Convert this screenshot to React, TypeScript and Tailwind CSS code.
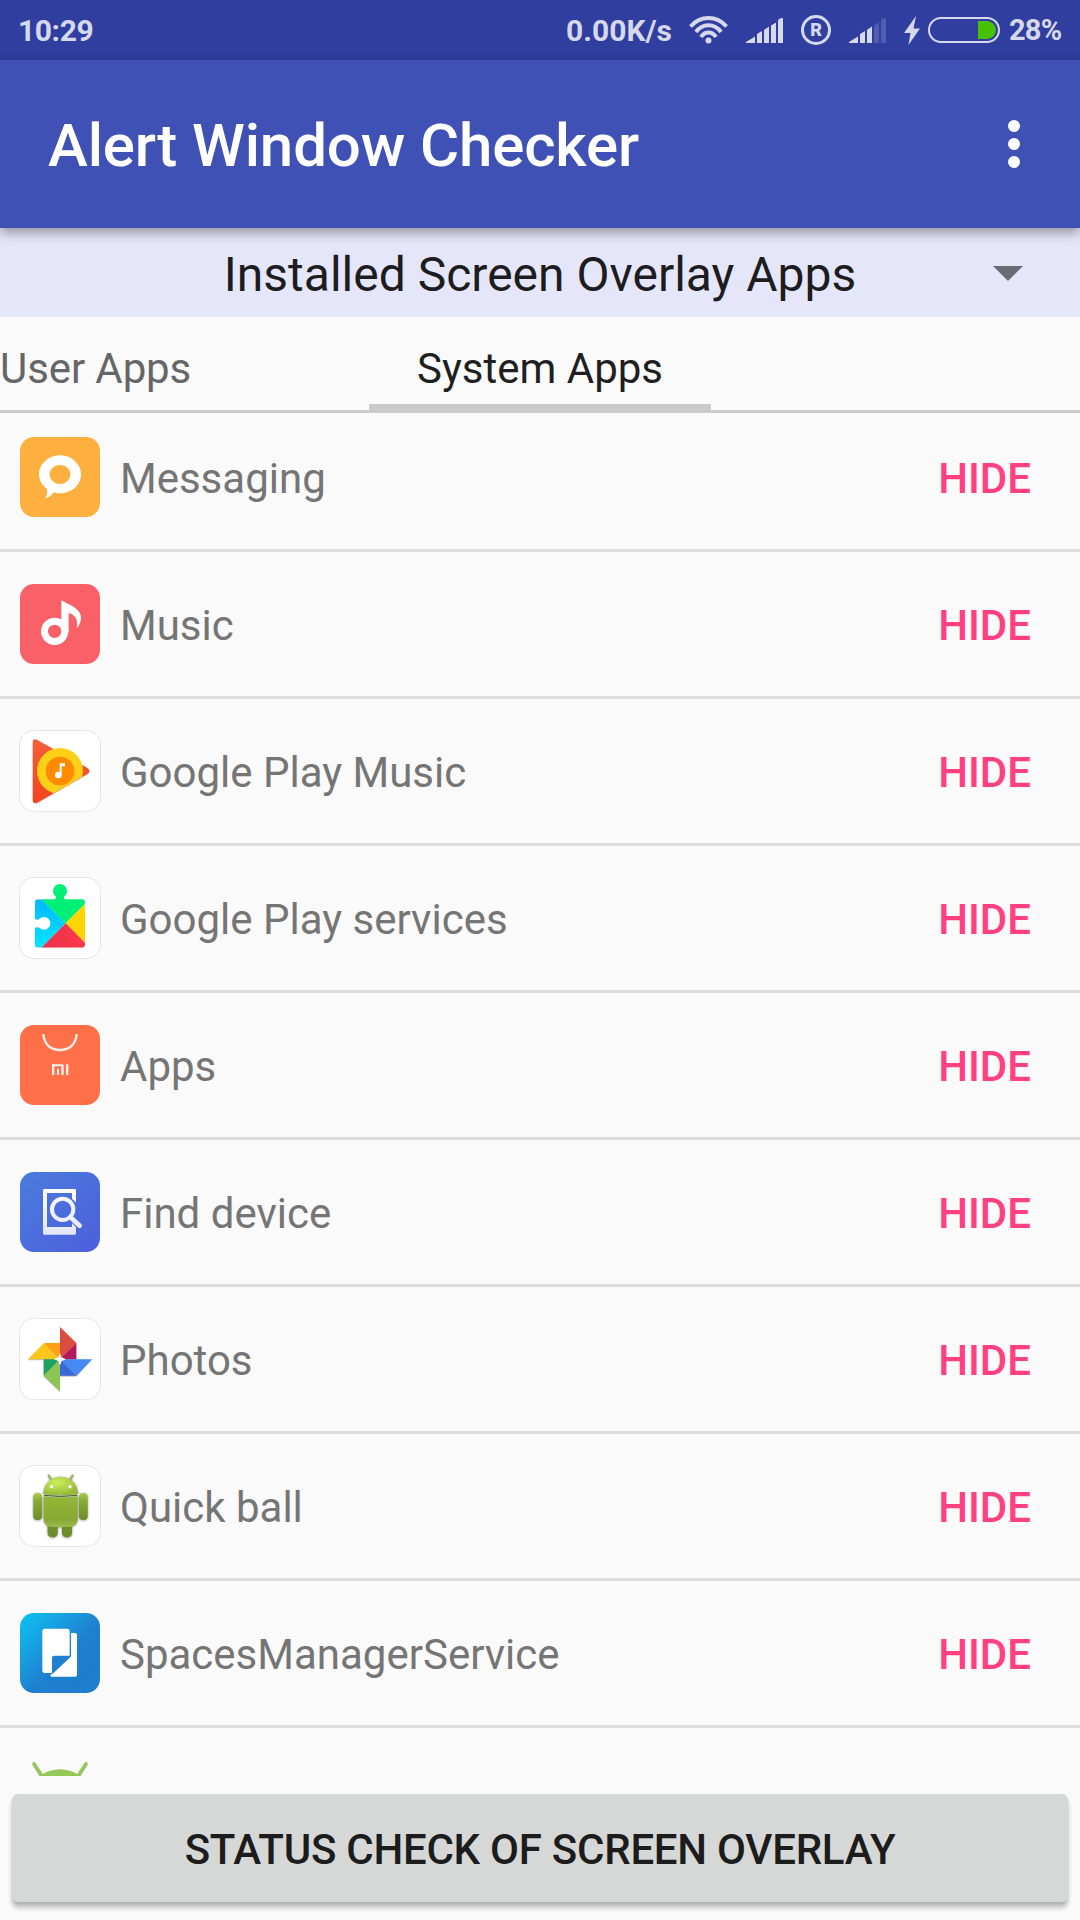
import React from 'react';

type AppItem = {
  name: string;
  icon: React.ReactNode;
  tile: string;
};

const WHITE_TILE = 'bg-white shadow-[0_0_0_1px_#e6e6e6]';

const Glyph: React.FC<{ children: React.ReactNode }> = ({ children }) => (
  <svg className="block h-20 w-20" viewBox="0 0 240 240" fill="none">
    {children}
  </svg>
);

const MessagingIcon = () => (
  <Glyph>
    <path
      fill="#fff"
      fillRule="evenodd"
      d="M120 55C155 55 183 81 183 112C183 144 155 169 120 169C113 169 107 168 101 166C95 174 87 182 78 183C76 183 77 180 79 178C82 172 82 164 81 156C67 146 57 130 57 112C57 81 86 55 120 55ZM120 84C103 84 89 96 89 112C89 128 103 141 120 141C137 141 151 128 151 112C151 96 137 84 120 84Z"
    />
  </Glyph>
);

const MusicIcon = () => (
  <Glyph>
    <circle cx="104" cy="142" r="30.500" stroke="#fff" strokeWidth="21" />
    <path fill="#fff" d="M124 49C146 62 183 73 183 101C183 114 176 126 170 133C174 112 171 94 146 87V142H124Z" />
  </Glyph>
);

const PlayMusicIcon = () => (
  <Glyph>
    <defs>
      <linearGradient id="pm-red" x1="0" y1="0" x2="0" y2="1">
        <stop offset="0" stopColor="#f4603a" />
        <stop offset="1" stopColor="#f5421f" />
      </linearGradient>
      <clipPath id="pm-clip">
        <path d="M0 0H240V107L205 127L46 219L0 245Z" />
      </clipPath>
    </defs>
    <path d="M46 218L205 127" stroke="#000" strokeOpacity=".2" strokeWidth="5" />
    <path
      d="M38 35Q38 21 51 26L203 111Q214 120 203 128L54 214Q38 221 38 206Z"
      fill="url(#pm-red)"
    />
    <circle cx="120" cy="120" r="69" fill="#fdd017" clipPath="url(#pm-clip)" />
    <circle cx="120" cy="120" r="43" fill="#ff8c00" />
    <path d="M119 97H135V106H125V132H119Z" fill="#fff" />
    <circle cx="115" cy="132" r="10" fill="#fff" />
  </Glyph>
);

const PlayServicesIcon = () => (
  <Glyph>
    <defs>
      <clipPath id="ps-clip">
        <rect x="45" y="64" width="150" height="145" rx="9" />
      </clipPath>
      <linearGradient id="ps-blue" x1="0" y1="0" x2="0" y2="1">
        <stop offset="0" stopColor="#00b8ff" />
        <stop offset="1" stopColor="#00e5ff" />
      </linearGradient>
      <linearGradient id="ps-red" x1="0" y1="0" x2="1" y2="0">
        <stop offset="0" stopColor="#e9304f" />
        <stop offset="1" stopColor="#ff3a44" />
      </linearGradient>
    </defs>
    <path d="M108 52Q110 60 103 66H137Q130 60 132 52Z" fill="#00f076" />
    <circle cx="120" cy="39" r="21" fill="#00f076" />
    <g clipPath="url(#ps-clip)">
      <path d="M45 64H65L137 136L64 209H45Z" fill="url(#ps-blue)" />
      <path d="M62 61H212L137 136Z" fill="#00f076" />
      <path d="M195 78L137 136L195 194Z" fill="#ffd500" />
      <path d="M64 209L137 136L210 209Z" fill="url(#ps-red)" />
      <path d="M43 122Q50 127 58 124V149Q50 145 43 151Z" fill="#fff" />
      <circle cx="72" cy="136" r="19" fill="#fff" />
    </g>
  </Glyph>
);

const MiAppsIcon = () => (
  <Glyph>
    <path d="M70 27C72 58 92 75 120 75C148 75 168 58 170 27" stroke="#fff1ec" strokeWidth="7" />
    <g fill="#fff1ec">
      <rect x="96" y="118" width="7" height="32" />
      <rect x="96" y="118" width="34" height="6" rx="2" />
      <rect x="124" y="120" width="7" height="30" />
      <rect x="111" y="131" width="6" height="19" />
      <rect x="138" y="118" width="7" height="32" />
    </g>
  </Glyph>
);

const FindDeviceIcon = () => (
  <Glyph>
    <defs>
      <linearGradient id="fd-fill" gradientUnits="userSpaceOnUse" x1="0" y1="50" x2="0" y2="190">
        <stop offset="0" stopColor="#fff" />
        <stop offset="1" stopColor="#e3e5f7" />
      </linearGradient>
    </defs>
    <path
      fill="url(#fd-fill)"
      d="M73 51H164Q168 51 168 55V92L156 80V63H81V165H156V153L168 166V184Q168 188 164 188H73Q69 188 69 184V55Q69 51 73 51Z"
    />
    <circle cx="128" cy="112" r="32" stroke="url(#fd-fill)" strokeWidth="12" />
    <path d="M151 135L179 161" stroke="#eceefa" strokeWidth="14" strokeLinecap="round" />
  </Glyph>
);

const PhotosIcon = () => (
  <Glyph>
    <g className="drop-shadow-[0_2px_2px_rgba(0,0,0,0.35)]">
      <path d="M120 24L169 72L120 121Z" fill="#db4e3f" />
      <path d="M169 72V121H120Z" fill="#b3195c" />
      <path d="M24 121L72 72L120 121Z" fill="#ffc61c" />
      <path d="M72 72H120V121Z" fill="#ff9f14" />
      <path d="M216 121L169 170L120 121Z" fill="#4688f4" />
      <path d="M120 121V170H169Z" fill="#3b69d3" />
      <path d="M71 121H120L71 170Z" fill="#1ca261" />
      <path d="M71 170L120 121V217Z" fill="#8bc653" />
    </g>
    <path d="M120 102L124 115L138 121L125 126L120 139L115 126L102 121L115 115Z" fill="#fff" />
  </Glyph>
);

const AndroidIcon = () => (
  <Glyph>
    <defs>
      <radialGradient id="an-head" cx=".4" cy=".3" r=".7">
        <stop offset="0" stopColor="#cdf05c" />
        <stop offset="1" stopColor="#93ba38" />
      </radialGradient>
      <linearGradient id="an-body" x1="0" y1="0" x2="0" y2="1">
        <stop offset="0" stopColor="#93b837" />
        <stop offset=".75" stopColor="#88a833" />
        <stop offset="1" stopColor="#9cbd4c" />
      </linearGradient>
      <linearGradient id="an-limb" x1="0" y1="0" x2="0" y2="1">
        <stop offset="0" stopColor="#a4cc42" />
        <stop offset=".3" stopColor="#87aa33" />
        <stop offset="1" stopColor="#6f8d29" />
      </linearGradient>
    </defs>
    <g className="drop-shadow-[0_1px_3px_rgba(0,0,0,0.5)]">
      <path d="M86 28L95 44M158 28L149 44" stroke="#8fae3c" strokeWidth="5" strokeLinecap="round" />
      <rect x="83" y="160" width="30" height="54" rx="13" fill="#6f8d2a" />
      <rect x="126" y="160" width="30" height="54" rx="13" fill="#6f8d2a" />
      <path d="M70 84C71 54 92 33 122 33C152 33 173 54 174 84Q122 92 70 84Z" fill="url(#an-head)" />
      <path d="M71 91Q122 98 173 91V158Q173 182 144 183H100Q71 182 71 158Z" fill="url(#an-body)" />
      <rect x="40" y="82" width="26" height="80" rx="12" fill="url(#an-limb)" />
      <rect x="177" y="82" width="26" height="80" rx="12" fill="url(#an-limb)" />
    </g>
    <path d="M72 88Q122 95 172 88" stroke="#4a5c22" strokeWidth="3" />
    <circle cx="95" cy="62" r="5" fill="#fff" />
    <circle cx="150" cy="62" r="5" fill="#fff" />
  </Glyph>
);

const SpacesIcon = () => (
  <Glyph>
    <path d="M153 60H165Q171 60 171 66V185Q171 191 165 191H93L91 187L153 130Z" fill="#fff" />
    <path d="M74 47H142Q149 47 149 54V128H104Q96 128 96 136V180H74Q67 180 67 173V54Q67 47 74 47Z" fill="#fff" />
    <path d="M96 180V136Q96 129 104 129H151L151 132L98 182Z" fill="#1f7fd0" />
  </Glyph>
);

const DroidIcon = () => (
  <Glyph>
    <g className="drop-shadow-[0_2px_2px_rgba(0,0,0,0.3)]">
      <path d="M42 11L66 48M198 11L174 48" stroke="#93c756" strokeWidth="10" strokeLinecap="round" />
      <circle cx="120" cy="127" r="99" fill="#93c756" />
    </g>
  </Glyph>
);

const apps: AppItem[] = [
  { name: 'Messaging', icon: <MessagingIcon />, tile: 'bg-[#fdb03f]' },
  { name: 'Music', icon: <MusicIcon />, tile: 'bg-[#f96068]' },
  { name: 'Google Play Music', icon: <PlayMusicIcon />, tile: WHITE_TILE },
  { name: 'Google Play services', icon: <PlayServicesIcon />, tile: WHITE_TILE },
  { name: 'Apps', icon: <MiAppsIcon />, tile: 'bg-[#ff7048]' },
  { name: 'Find device', icon: <FindDeviceIcon />, tile: 'bg-linear-to-br from-[#4a7cdd] to-[#4c5fdb]' },
  { name: 'Photos', icon: <PhotosIcon />, tile: WHITE_TILE },
  { name: 'Quick ball', icon: <AndroidIcon />, tile: WHITE_TILE },
  {
    name: 'SpacesManagerService',
    icon: <SpacesIcon />,
    tile: 'bg-linear-to-br from-[#06c4f2] via-[#1e80d0] via-55% to-[#1f7dcd]',
  },
];

const SignalIcon: React.FC<{ level: number }> = ({ level }) => {
  const bars = [
    'M0 25V24L9 18.500V25Z',
    'M11 25V16L16 13V25Z',
    'M18 25V12L23 8.500V25Z',
    'M25 25V7.500L30 4.500V25Z',
    'M32 25V3Q32 1 34 .5L37 0V25Z',
  ];
  return (
    <svg className="h-[25px] w-[37px]" viewBox="0 0 37 25" fill="#d6d8ec">
      {bars.map((d, i) => (
        <path key={d} d={d} opacity={i < level ? 1 : 0.2} />
      ))}
    </svg>
  );
};

const StatusBar = () => (
  <div className="flex h-[60px] items-center bg-[#303f9f] pr-[18px] pl-[18px] text-[30px] font-bold text-[#d6d8ec]">
    <span className="w-[76px] pt-px leading-none tracking-[-0.4px]">10:29</span>
    <span className="ml-auto pt-px leading-none">0.00K/s</span>
    <svg className="ml-[17px] h-[28px] w-[39px]" viewBox="0 0 39 28" fill="none" stroke="#d6d8ec" strokeWidth="4">
      <path d="M1.500 10.500C11.500 -.7 27.500 -.7 37.500 10.500" />
      <path d="M7 16C13.500 7 25.500 7 32 16" />
      <path d="M12 21C16 15 23 15 27 21" />
      <circle cx="19.500" cy="24.500" r="3" fill="#d6d8ec" stroke="none" />
    </svg>
    <div className="ml-[18px]">
      <SignalIcon level={5} />
    </div>
    <div className="ml-[18px] flex h-[30px] w-[30px] items-center justify-center rounded-full border-[3px] border-[#d6d8ec] text-[18px] leading-none font-black">
      R
    </div>
    <div className="ml-[18px]">
      <SignalIcon level={3} />
    </div>
    <svg className="ml-[18px] h-[29px] w-[16px]" viewBox="0 0 16 29" fill="#d6d8ec">
      <path d="M12 0L0 17H6.500L4.500 29L16 12.500H9.500Z" />
    </svg>
    <div className="ml-[8px] flex h-[26px] w-[72px] justify-end rounded-full border-2 border-[#d6d8ec] p-0.5">
      <div className="h-[18px] w-[18px] rounded-r-full bg-[#47c200]" />
    </div>
    <span className="ml-[9px] w-[53px] pt-px text-[29px] leading-none tracking-[-0.8px]">28%</span>
  </div>
);

const App: React.FC = () => {
  return (
    <div className="flex h-[1920px] w-[1080px] flex-col overflow-hidden bg-[#fafafa] font-['Roboto',sans-serif]">
      <StatusBar />

      {/* Toolbar */}
      <header className="relative z-10 flex h-[168px] items-center justify-between bg-[#3f51b5] pr-[60px] pl-12 shadow-[0_4px_12px_rgba(0,0,0,0.4)]">
        <h1 className="pt-1 text-[60px] leading-none font-medium tracking-[-0.13px] text-white">Alert Window Checker</h1>
        <button className="flex flex-col gap-1.5">
          <span className="h-3 w-3 rounded-full bg-white" />
          <span className="h-3 w-3 rounded-full bg-white" />
          <span className="h-3 w-3 rounded-full bg-white" />
        </button>
      </header>

      {/* Category spinner */}
      <div className="flex h-[89px] items-center bg-[#e6e6fa] pr-[57px] pl-[87px]">
        <span className="flex-1 pt-1 text-center text-[48px] leading-none text-[#1d1d1f]">
          Installed Screen Overlay Apps
        </span>
        <svg className="mt-0.5 h-[15px] w-[30px]" viewBox="0 0 30 15" fill="#6b6b74">
          <path d="M0 0H30L15 15Z" />
        </svg>
      </div>

      {/* Tabs */}
      <nav className="flex h-24 items-stretch border-b-[3px] border-[#cbcbcb] text-[42px] leading-none">
        <div className="flex w-[369px] items-center pt-2.5 tracking-[-0.1px] text-[#666]">User Apps</div>
        <div className="flex w-[342px] items-center justify-center border-b-[6px] border-[#cbcbcb] pt-4 text-[#1f1f1f]">
          System Apps
        </div>
      </nav>

      {/* The list is scrolled a little, so its first row starts above the edge */}
      <div className="h-[1363px] overflow-hidden">
        <ul className="-mt-2">
          {apps.map((app) => (
            <li key={app.name} className="flex h-[147px] items-center border-b-[3px] border-[#dcdcdc] pr-[49px] pl-5">
              <div className={`h-20 w-20 overflow-hidden rounded-[14px] ${app.tile}`}>{app.icon}</div>
              <span className="ml-5 flex-1 pt-1 text-[42px] leading-none text-[#757575]">{app.name}</span>
              <button className="pt-1 text-[42px] leading-none font-medium text-[#ff4081]">HIDE</button>
            </li>
          ))}
          <li className="flex h-[144px] items-center pl-5">
            <DroidIcon />
          </li>
        </ul>
      </div>

      <button className="mx-3 mt-[18px] flex h-[108px] items-center justify-center rounded-md bg-[#d6d8d7] pt-1 text-[42px] leading-none font-medium tracking-[-0.25px] text-[#1c1c1c] shadow-[0_6px_5px_rgba(0,0,0,0.22),0_2px_3px_rgba(0,0,0,0.1)]">
        STATUS CHECK OF SCREEN OVERLAY
      </button>
    </div>
  );
};

export default App;
